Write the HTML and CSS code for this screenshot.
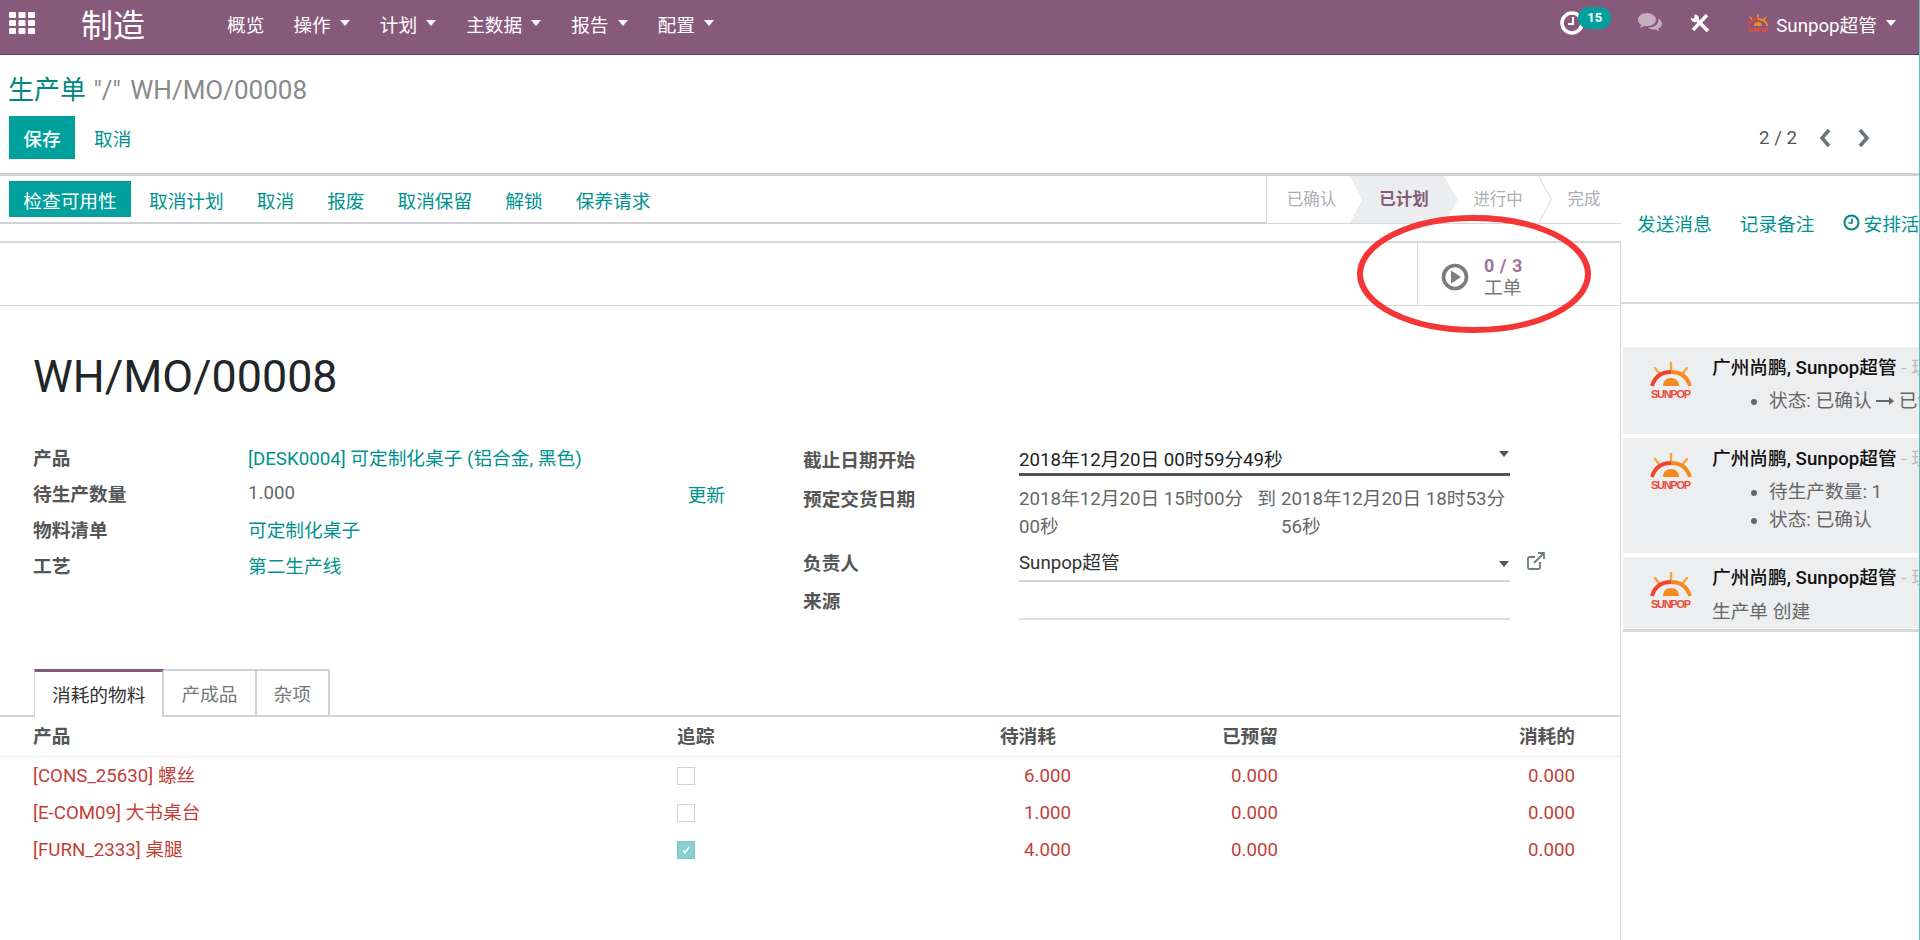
FILE: index.html

```html
<!DOCTYPE html>
<html lang="zh-CN">
<head>
    <meta charset="UTF-8">
    <title>生产单 WH/MO/00008</title>
    <link rel="stylesheet" href="styles.css">
</head>
<body>
    <header class="navbar">
        <svg class="apps-icon" width="26" height="22" viewBox="0 0 26 22" fill="#fff">
            <rect x="0" y="0" width="7" height="6" rx="1"/><rect x="9.500" y="0" width="7" height="6" rx="1"/><rect x="19" y="0" width="7" height="6" rx="1"/>
            <rect x="0" y="8" width="7" height="6" rx="1"/><rect x="9.500" y="8" width="7" height="6" rx="1"/><rect x="19" y="8" width="7" height="6" rx="1"/>
            <rect x="0" y="16" width="7" height="6" rx="1"/><rect x="9.500" y="16" width="7" height="6" rx="1"/><rect x="19" y="16" width="7" height="6" rx="1"/>
        </svg>
        <div class="brand">制造</div>
        <nav class="menu">
            <a>概览</a>
            <a>操作<i class="caret"></i></a>
            <a>计划<i class="caret"></i></a>
            <a>主数据<i class="caret"></i></a>
            <a>报告<i class="caret"></i></a>
            <a>配置<i class="caret"></i></a>
        </nav>
        <div class="systray">
            <div class="activity">
                <svg width="26" height="26" viewBox="0 0 26 26" fill="none" stroke="#fff">
                    <circle cx="13" cy="13" r="10" stroke-width="3.600"/>
                    <path d="M14 7v7H9" stroke-width="2"/>
                </svg>
                <span class="badge">15</span>
            </div>
            <svg class="chat-icon" width="26" height="22" viewBox="0 0 26 22" fill="#c5aebf">
                <path d="M10 1C4.800 1 1 4 1 7.800c0 2.200 1.300 4 3.300 5.200-.2 1-.8 2-1.500 2.800 1.700-.2 3.300-1 4.500-2 .9.200 1.800.3 2.700.3 5.200 0 9-3 9-6.300S15.200 1 10 1z"/>
                <path d="M21 6.500c.3.600.4 1.200.4 1.900 0 4-4.200 7-9.400 7h-1c1.400 1.400 3.400 2.200 5.800 2.200.7 0 1.400-.1 2-.2.900.8 2.200 1.400 3.600 1.600-.6-.7-1-1.400-1.200-2.200 2.200-1 3.800-2.900 3.800-5 0-2.100-1.500-4-4-5.300z"/>
            </svg>
            <svg class="tools-icon" width="20" height="18" viewBox="0 0 20 18" fill="none" stroke="#fff">
                <path d="M17 1 3 16" stroke-width="3.400"/>
                <path d="M7 6l11 11" stroke-width="3.600"/>
                <path d="M1 3.500C.5 6 3 9 6 8l3-3C9.500 2.500 7 .5 4.500.5v3.200L2.500 5z" fill="#fff" stroke="none"/>
            </svg>
            <div class="user">
                <svg class="user-logo" width="22" height="19" viewBox="0 0 44 38">
                    <path d="M22 1v6M6 6l4 5M38 6l-4 5" stroke="#f5a63a" stroke-width="2.400" stroke-linecap="round" fill="none"/>
                    <path d="M3 24C6 14 13 10 22 10" stroke="#f0432c" stroke-width="3.800" fill="none"/>
                    <path d="M22 10c9 0 16 4 19 14" stroke="#f58a1f" stroke-width="3.800" fill="none"/>
                    <path d="M14 24c0-5 3-8 8-8s8 3 8 8z" fill="#f58a1f"/>
                    <text x="22" y="36" text-anchor="middle" textLength="40" class="logo-text">SUNPOP</text>
                </svg>
                <span>Sunpop超管</span>
                <i class="caret"></i>
            </div>
        </div>
    </header>

    <section class="control-panel">
        <div class="breadcrumb"><a>生产单</a> <span>"/" WH/MO/00008</span></div>
        <div class="cp-row">
            <div class="cp-buttons">
                <button class="btn-primary save-btn">保存</button>
                <a class="link-btn">取消</a>
            </div>
            <div class="pager">
                <span>2 / 2</span>
                <svg width="14" height="20" viewBox="0 0 14 20" fill="none" stroke="#6c757a" stroke-width="3.600"><path d="M11 2 4 10l7 8"/></svg>
                <svg width="14" height="20" viewBox="0 0 14 20" fill="none" stroke="#6c757a" stroke-width="3.600"><path d="M3 2l7 8-7 8"/></svg>
            </div>
        </div>
    </section>

    <main class="content">
        <div class="form-view">
            <div class="status-bar">
                <div class="status-buttons">
                    <button class="btn-primary">检查可用性</button>
                    <a>取消计划</a>
                    <a>取消</a>
                    <a>报废</a>
                    <a>取消保留</a>
                    <a>解锁</a>
                    <a>保养请求</a>
                </div>
                <div class="pipeline">
                    <div class="stage stage-first">已确认</div>
                    <div class="stage stage-active">已计划</div>
                    <div class="stage">进行中</div>
                    <div class="stage stage-last">完成</div>
                </div>
            </div>

            <div class="sheet">
                <div class="button-box">
                    <div class="stat-button">
                        <svg width="30" height="30" viewBox="0 0 30 30">
                            <circle cx="15" cy="15" r="11.500" fill="none" stroke="#7c7c7c" stroke-width="3.600"/>
                            <path d="M11 8.500v13L21 15z" fill="#7c7c7c"/>
                        </svg>
                        <div class="stat-info">
                            <div class="stat-value">0 / 3</div>
                            <div class="stat-text">工单</div>
                        </div>
                    </div>
                </div>

                <h1 class="record-title">WH/MO/00008</h1>

                <div class="form-groups">
                    <div class="group group-left">
                        <label>产品</label><div class="value"><a>[DESK0004] 可定制化桌子 (铝合金, 黑色)</a></div>
                        <label>待生产数量</label><div class="value qty-row"><span>1.000</span><a>更新</a></div>
                        <label>物料清单</label><div class="value"><a>可定制化桌子</a></div>
                        <label>工艺</label><div class="value"><a>第二生产线</a></div>
                    </div>
                    <div class="group group-right">
                        <label>截止日期开始</label>
                        <div class="field field-focus">2018年12月20日 00时59分49秒<i class="caret caret-grey"></i></div>
                        <label class="label-dates">预定交货日期</label>
                        <div class="dates">
                            <span>2018年12月20日 15时00分<br>00秒</span>
                            <span class="date-to">到</span>
                            <span>2018年12月20日 18时53分<br>56秒</span>
                        </div>
                        <label class="label-user">负责人</label>
                        <div class="field field-user">
                            Sunpop超管<i class="caret caret-grey"></i>
                            <svg class="external-icon" width="20" height="20" viewBox="0 0 20 20" fill="none" stroke="#6f7c80" stroke-width="1.800">
                                <path d="M14 11v5.500a1.500 1.500 0 0 1-1.500 1.500h-9A1.500 1.500 0 0 1 2 16.500v-9A1.500 1.500 0 0 1 3.500 6H9"/>
                                <path d="M8 12 18 2M12 2h6v6"/>
                            </svg>
                        </div>
                        <label class="label-origin">来源</label>
                        <div class="field field-empty"></div>
                    </div>
                </div>

                <div class="tabs">
                    <a class="tab tab-active">消耗的物料</a>
                    <a class="tab">产成品</a>
                    <a class="tab">杂项</a>
                </div>

                <table class="lines">
                    <colgroup>
                        <col class="col-product"><col class="col-track"><col class="col-todo"><col class="col-num"><col class="col-done"><col>
                    </colgroup>
                    <thead>
                        <tr>
                            <th class="first">产品</th>
                            <th>追踪</th>
                            <th class="num todo-head">待消耗</th>
                            <th class="num">已预留</th>
                            <th class="num">消耗的</th>
                            <th></th>
                        </tr>
                    </thead>
                    <tbody>
                        <tr>
                            <td class="first">[CONS_25630] 螺丝</td>
                            <td><span class="checkbox"></span></td>
                            <td class="num">6.000</td><td class="num">0.000</td><td class="num">0.000</td><td></td>
                        </tr>
                        <tr>
                            <td class="first">[E-COM09] 大书桌台</td>
                            <td><span class="checkbox"></span></td>
                            <td class="num">1.000</td><td class="num">0.000</td><td class="num">0.000</td><td></td>
                        </tr>
                        <tr>
                            <td class="first">[FURN_2333] 桌腿</td>
                            <td>
                                <span class="checkbox checked">
                                    <svg width="12" height="12" viewBox="0 0 12 12" fill="none" stroke="#fff" stroke-width="1.500"><path d="M3 6.500 5 9l4-6"/></svg>
                                </span>
                            </td>
                            <td class="num">4.000</td><td class="num">0.000</td><td class="num">0.000</td><td></td>
                        </tr>
                    </tbody>
                </table>
            </div>
        </div>

        <aside class="chatter">
            <div class="chatter-topbar">
                <a>发送消息</a>
                <a>记录备注</a>
                <a class="schedule">
                    <svg width="17" height="17" viewBox="0 0 17 17" fill="none" stroke="#008784"><circle cx="8.500" cy="8.500" r="7" stroke-width="2"/><path d="M9 4.500V9H5.500" stroke-width="1.600"/></svg>
                    安排活动
                </a>
            </div>
            <div class="thread">
                <div class="message message-one">
                    <svg class="msg-logo" width="44" height="38" viewBox="0 0 44 38">
                        <path d="M22 1v6M6 6l4 5M38 6l-4 5" stroke="#f5a63a" stroke-width="2.400" stroke-linecap="round" fill="none"/>
                        <path d="M3 24C6 14 13 10 22 10" stroke="#f0432c" stroke-width="3.800" fill="none"/>
                        <path d="M22 10c9 0 16 4 19 14" stroke="#f58a1f" stroke-width="3.800" fill="none"/>
                        <path d="M14 24c0-5 3-8 8-8s8 3 8 8z" fill="#f58a1f"/>
                        <text x="22" y="36" text-anchor="middle" textLength="40" class="logo-text">SUNPOP</text>
                    </svg>
                    <div class="msg-body">
                        <div class="msg-author"><b>广州尚鹏, Sunpop超管</b> <span>- 现在</span></div>
                        <ul>
                            <li>状态: 已确认 <svg class="arrow" width="18" height="10" viewBox="0 0 18 10"><path d="M0 4h13V1l5 4-5 4V6H0z" fill="#666"/></svg> 已计划</li>
                        </ul>
                    </div>
                </div>
                <div class="message message-two">
                    <svg class="msg-logo" width="44" height="38" viewBox="0 0 44 38">
                        <path d="M22 1v6M6 6l4 5M38 6l-4 5" stroke="#f5a63a" stroke-width="2.400" stroke-linecap="round" fill="none"/>
                        <path d="M3 24C6 14 13 10 22 10" stroke="#f0432c" stroke-width="3.800" fill="none"/>
                        <path d="M22 10c9 0 16 4 19 14" stroke="#f58a1f" stroke-width="3.800" fill="none"/>
                        <path d="M14 24c0-5 3-8 8-8s8 3 8 8z" fill="#f58a1f"/>
                        <text x="22" y="36" text-anchor="middle" textLength="40" class="logo-text">SUNPOP</text>
                    </svg>
                    <div class="msg-body">
                        <div class="msg-author"><b>广州尚鹏, Sunpop超管</b> <span>- 现在</span></div>
                        <ul>
                            <li>待生产数量: 1</li>
                            <li>状态: 已确认</li>
                        </ul>
                    </div>
                </div>
                <div class="message message-three">
                    <svg class="msg-logo" width="44" height="38" viewBox="0 0 44 38">
                        <path d="M22 1v6M6 6l4 5M38 6l-4 5" stroke="#f5a63a" stroke-width="2.400" stroke-linecap="round" fill="none"/>
                        <path d="M3 24C6 14 13 10 22 10" stroke="#f0432c" stroke-width="3.800" fill="none"/>
                        <path d="M22 10c9 0 16 4 19 14" stroke="#f58a1f" stroke-width="3.800" fill="none"/>
                        <path d="M14 24c0-5 3-8 8-8s8 3 8 8z" fill="#f58a1f"/>
                        <text x="22" y="36" text-anchor="middle" textLength="40" class="logo-text">SUNPOP</text>
                    </svg>
                    <div class="msg-body">
                        <div class="msg-author"><b>广州尚鹏, Sunpop超管</b> <span>- 现在</span></div>
                        <p>生产单 创建</p>
                    </div>
                </div>
            </div>
        </aside>
    </main>

    <svg class="annotation" width="246" height="128" viewBox="0 0 246 128">
        <ellipse cx="123" cy="63" rx="114" ry="56" fill="none" stroke="#f43636" stroke-width="6"/>
    </svg>
</body>
</html>
```

FILE: styles.css

```css
html, body {
    margin: 0;
    height: 940px;
    overflow: hidden;
}

body {
    position: relative;
    display: flex;
    flex-direction: column;
    font-family: Roboto, "Noto Sans CJK SC", sans-serif;
    font-size: 18.700px;
    color: #666;
    background: #fff;
    border-right: 1px solid #62bfc0;
    box-sizing: border-box;
}

a {
    color: #00928f;
    text-decoration: none;
}

.logo-text {
    font-family: "Liberation Sans", sans-serif;
    font-size: 11px;
    font-weight: 700;
    fill: #ee4b3a;
}

/* top bar */
.navbar {
    display: flex;
    align-items: center;
    flex: none;
    height: 55px;
    margin-right: -1px;
    padding-bottom: 8px;
    box-sizing: border-box;
    background: #875a7b;
    border-bottom: 1px solid #5c3d55;
    color: #fff;
}

.apps-icon {
    margin-left: 9px;
}

.brand {
    margin-left: 46px;
    font-size: 32px;
    width: 146px;
}

.menu {
    display: flex;
    gap: 30px;
}

.menu a {
    color: #fff;
    display: flex;
    align-items: center;
}

.menu a:first-child {
    margin-right: -1px;
}

.caret {
    display: inline-block;
    width: 0;
    height: 0;
    margin-left: 9px;
    border-top: 6px solid #fff;
    border-left: 5px solid transparent;
    border-right: 5px solid transparent;
}

.caret-grey {
    position: absolute;
    right: 1px;
    top: 11px;
    border-top-color: #555;
}

.systray {
    display: flex;
    align-items: center;
    margin-left: auto;
    padding-right: 24px;
}

.activity {
    position: relative;
    display: flex;
    width: 76px;
}

.badge {
    position: absolute;
    left: 19px;
    top: -3px;
    width: 33px;
    height: 22px;
    border-radius: 11px;
    background: #00a09d;
    font-size: 13px;
    font-weight: 700;
    line-height: 22px;
    text-align: center;
}

.chat-icon {
    margin-left: 2px;
}

.tools-icon {
    margin-left: 27px;
}

.user {
    display: flex;
    align-items: center;
    margin-left: 37px;
}

.user span {
    margin-left: 7px;
}

.user .caret {
    margin-left: 9px;
}

/* breadcrumb and save row */
.control-panel {
    flex: none;
    height: 118px;
    padding: 0 0 0 9px;
    box-sizing: border-box;
}

.breadcrumb {
    height: 61px;
    margin-left: -1px;
    line-height: 70px;
    font-size: 26px;
    color: #8a8a8a;
}

.breadcrumb a {
    color: #008784;
}

.breadcrumb span {
    margin-left: 1px;
    word-spacing: 3px;
}

.cp-row {
    display: flex;
    justify-content: space-between;
    align-items: center;
}

.cp-buttons {
    display: flex;
    align-items: center;
}

.btn-primary {
    border: 0;
    background: #00a09d;
    color: #fff;
    font: inherit;
    padding: 0;
}

.save-btn {
    width: 66px;
    height: 43px;
    font-weight: 500;
}

.link-btn {
    margin-left: 19px;
}

.pager {
    display: flex;
    align-items: center;
    gap: 25px;
    padding-right: 48px;
    color: #555;
}

.pager span {
    margin-right: -4px;
}

/* main split */
.content {
    display: flex;
    flex: 1;
    min-height: 0;
    border-top: 3px solid #cfd1d4;
}

.form-view {
    width: 1621px;
    flex: none;
}

.status-bar {
    display: flex;
    justify-content: space-between;
    height: 48px;
    box-sizing: border-box;
    border-bottom: 1px solid #d5d7da;
}

.status-buttons {
    display: flex;
    align-items: center;
    flex: 1;
    gap: 33px;
    padding-left: 9px;
    border-bottom: 2px solid #cfd1d4;
    margin-bottom: -1px;
}

.status-buttons .btn-primary {
    width: 122px;
    height: 36px;
    margin-right: -15px;
}

.pipeline {
    display: flex;
    width: 355px;
    flex: none;
    color: #adb0b4;
    font-size: 16.500px;
    border-left: 1px solid #d5d7da;
    box-sizing: border-box;
}

.stage {
    position: relative;
    width: 108px;
    margin-left: -14px;
    line-height: 48px;
    text-align: center;
    flex: none;
}

.stage::after {
    content: "";
    position: absolute;
    right: 0;
    top: 0;
    bottom: 0;
    width: 14px;
    background: #d5d7da;
    clip-path: polygon(0 0, 1px 0, 100% 50%, 1px 100%, 0 100%, calc(100% - 1px) 50%);
}

.stage-first {
    width: 97px;
    margin-left: 0;
    padding-right: 8px;
    box-sizing: border-box;
}

.stage-active {
    background: #ecedef;
    color: #875a7b;
    font-weight: 700;
    clip-path: polygon(0 0, 94px 0, 100% 50%, 94px 100%, 0 100%, 14px 50%);
}

.stage-active::after {
    display: none;
}

.stage-last {
    width: 84px;
    padding-left: 8px;
    box-sizing: border-box;
}

.stage-last::after {
    display: none;
}

/* sheet */
.sheet {
    margin-top: 17px;
    border-top: 2px solid #d5d7da;
    border-right: 1px solid #d5d7da;
    height: 700px;
    box-sizing: border-box;
}

.button-box {
    display: flex;
    justify-content: flex-end;
    height: 62px;
    border-bottom: 1px solid #d5d7da;
}

.stat-button {
    display: flex;
    align-items: center;
    width: 203px;
    box-sizing: border-box;
    padding: 5px 0 0 22px;
    border-left: 1px solid #d5d7da;
}

.stat-info {
    margin-left: 14px;
    line-height: 22px;
}

.stat-value {
    color: #a0749a;
    font-size: 18px;
    font-weight: 700;
    letter-spacing: .5px;
}

.stat-text {
    color: #777;
}

.record-title {
    margin: 44px 0 0 33px;
    font-size: 44.800px;
    font-weight: 400;
    line-height: 54px;
    color: #212529;
}

.form-groups {
    display: flex;
    margin-top: 36px;
    padding-left: 33px;
}

.group {
    display: grid;
    align-content: start;
}

.group label {
    font-weight: 700;
    color: #555;
}

.group-left {
    width: 770px;
    flex: none;
    margin-top: -2px;
    grid-template-columns: 215px 477px;
    grid-auto-rows: 36px;
    align-items: center;
}

.qty-row {
    display: flex;
    justify-content: space-between;
    align-items: center;
    padding-top: 2px;
}

.group-right {
    grid-template-columns: 216px 491px;
}

.field {
    position: relative;
    box-sizing: border-box;
    line-height: 28px;
}

.field-focus {
    height: 36px;
    padding-top: 6px;
    color: #222;
    border-bottom: 3px solid #555;
}

.group-right label {
    padding-top: 5px;
}

.group-right .label-dates {
    padding-top: 8px;
}

.group-right .label-user {
    padding-top: 2px;
}

.group-right .label-origin {
    padding-top: 4px;
}

.dates {
    display: flex;
    justify-content: space-between;
    margin-top: 9px;
    line-height: 28px;
    margin-bottom: 5px;
}

.date-to {
    margin: 0 0 0 7px;
}

.dates span:first-child {
    width: 226px;
}

.dates span:last-child {
    width: 229px;
}

.field-user {
    height: 36px;
    padding-top: 3px;
    color: #333;
    border-bottom: 2px solid #ced4da;
}

.field-user .caret-grey {
    top: 15px;
}

.external-icon {
    position: absolute;
    right: -36px;
    top: 5px;
}

.field-empty {
    height: 36px;
    margin-top: 2px;
    border-bottom: 2px solid #dcdfe2;
}

/* tabs */
.tabs {
    display: flex;
    margin-top: 49px;
    padding-left: 34px;
    border-bottom: 2px solid #ced4da;
    height: 46px;
}

.tab {
    height: 46px;
    line-height: 48px;
    padding: 0 17px;
    box-sizing: border-box;
    color: #777;
    border: 2px solid #ced4da;
    border-left-width: 0;
    border-bottom-width: 0;
}

.tab-active {
    color: #333;
    background: #fff;
    height: 48px;
    border-top: 3px solid #875a7b;
    border-left: 1px solid #ced4da;
}

/* lines table */
.lines {
    width: 100%;
    border-collapse: collapse;
    table-layout: fixed;
    line-height: 22px;
}

.col-product { width: 677px; }
.col-track { width: 100px; }
.col-todo { width: 294px; }
.col-num { width: 207px; }
.col-done { width: 297px; }

.lines th {
    height: 39px;
    padding: 0;
    text-align: left;
    color: #555;
    font-weight: 700;
    border-bottom: 1px solid #e8eaec;
}

.lines td {
    height: 37px;
    padding: 0;
    color: #c13f37;
}

.lines .first {
    padding-left: 33px;
}

.lines .num {
    text-align: right;
}

.lines .todo-head {
    padding-right: 15px;
}

.checkbox {
    display: flex;
    align-items: center;
    justify-content: center;
    width: 18px;
    height: 18px;
    box-sizing: border-box;
    border: 1px solid #d0d3d6;
}

.checked {
    background: #8ad0cf;
    border-color: #7cc7c6;
}

/* chatter */
.chatter {
    flex: 1;
    min-width: 0;
    overflow: hidden;
}

.chatter-topbar {
    display: flex;
    align-items: center;
    gap: 28px;
    height: 128px;
    padding: 0 0 34px 16px;
    box-sizing: border-box;
    white-space: nowrap;
    border-bottom: 2px solid #d5d7da;
}

.schedule {
    display: flex;
    align-items: center;
    gap: 4px;
}

.thread {
    margin-top: 43px;
    padding-left: 2px;
}

.message {
    display: flex;
    background: #edeef0;
    margin-bottom: 3px;
    box-sizing: border-box;
    border-bottom: 1px solid #fff;
    white-space: nowrap;
}

.message-one { height: 88px; }
.message-two { height: 116px; }
.message-three {
    height: 72px;
    box-shadow: 0 3px 0 #d5d7da;
}

.msg-logo {
    margin: 15px 0 0 26px;
    flex: none;
}

.msg-body {
    margin-left: 19px;
    padding-top: 9px;
    color: #666;
}

.msg-author {
    line-height: 24px;
    color: #bbb;
}

.msg-author b {
    color: #111;
    font-weight: 500;
}

.msg-body ul {
    margin: 7px 0 0;
    padding-left: 57px;
    line-height: 28px;
}

.arrow {
    vertical-align: 1px;
}

.msg-body p {
    margin: 6px 0 0;
}

/* red circle drawn on the screenshot */
.annotation {
    position: absolute;
    left: 1351px;
    top: 211px;
    pointer-events: none;
}
```
